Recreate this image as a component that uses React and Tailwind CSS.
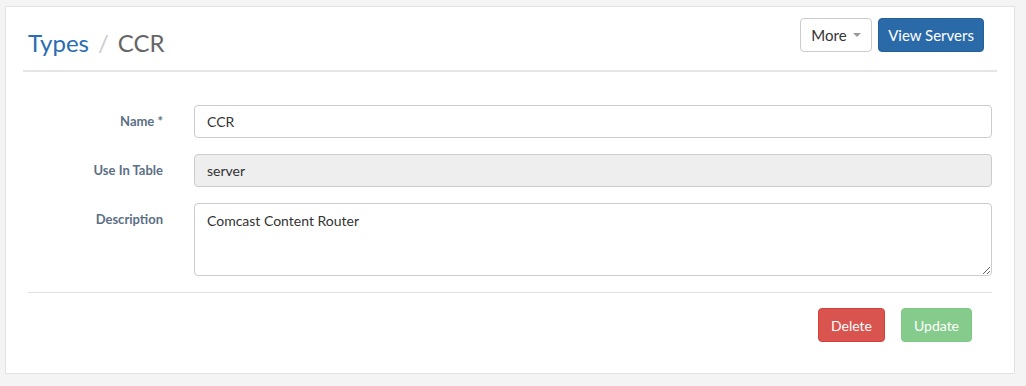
export default function App() {
  return (
    <div className="min-h-[386px] bg-[#f4f4f4] pt-[6px] pl-[5px] pr-[11px] pb-[12px] font-['Lato',sans-serif]">
      <div className="bg-white border border-[#e3e3e3] h-[368px]">
        {/* Header */}
        <div className="mx-[17px] flex items-start justify-between border-b-2 border-[#e5e5e5] h-[65px]">
          <h1 className="pl-[5px] pt-[21px] text-[24px] leading-[30px]">
            <a className="text-[#2a6db0]">Types</a>
            <span className="text-[#cccccc] px-[9px]">/</span>
            <span className="text-[#666666]">CCR</span>
          </h1>
          <div className="flex gap-[6px] pt-[11px] pr-[13px]">
            <button className="h-[34px] w-[72px] rounded-[4px] border border-[#cccccc] bg-white text-[15px] text-[#333] flex items-center justify-center gap-[6px]">
              More
              <span className="inline-block w-0 h-0 border-l-[4px] border-r-[4px] border-t-[4px] border-l-transparent border-r-transparent border-t-[#999]" />
            </button>
            <button className="h-[34px] w-[106px] rounded-[4px] bg-[#2b6aa8] border border-[#275f98] text-white text-[15px]">
              View Servers
            </button>
          </div>
        </div>

        {/* Form */}
        <div className="ml-[22px] mr-[22px] pt-[33px]">
          <div className="flex flex-col gap-[16px] pb-[16px]">
            <div className="flex gap-[31px]">
              <label className="w-[135px] shrink-0 text-right text-[13px] font-bold text-[#5b6f86] pt-[8px] leading-[16px]">
                Name *
              </label>
              <input
                defaultValue="CCR"
                className="flex-1 h-[33px] rounded-[4px] border border-[#cccccc] px-[12px] text-[14px] text-[#333] outline-none"
              />
            </div>
            <div className="flex gap-[31px]">
              <label className="w-[135px] shrink-0 text-right text-[13px] font-bold text-[#5b6f86] pt-[8px] leading-[16px]">
                Use In Table
              </label>
              <input
                defaultValue="server"
                disabled
                className="flex-1 h-[33px] rounded-[4px] border border-[#cccccc] bg-[#eeeeee] px-[12px] text-[14px] text-[#333] outline-none"
              />
            </div>
            <div className="flex gap-[31px]">
              <label className="w-[135px] shrink-0 text-right text-[13px] font-bold text-[#5b6f86] pt-[8px] leading-[16px]">
                Description
              </label>
              <textarea
                defaultValue="Comcast Content Router"
                className="flex-1 h-[73px] rounded-[4px] border border-[#cccccc] px-[12px] py-[6px] text-[14px] text-[#333] outline-none"
              />
            </div>
          </div>
          <div className="border-t border-[#e0e0e0] flex justify-end gap-[16px] pt-[15px] pr-[20px]">
            <button className="h-[34px] w-[67px] rounded-[4px] bg-[#d9534f] border border-[#d43f3a] text-white text-[14px]">
              Delete
            </button>
            <button className="h-[34px] w-[71px] rounded-[4px] bg-[#85cb8c] border border-[#7fc786] text-white text-[14px]">
              Update
            </button>
          </div>
        </div>
      </div>
    </div>
  );
}
